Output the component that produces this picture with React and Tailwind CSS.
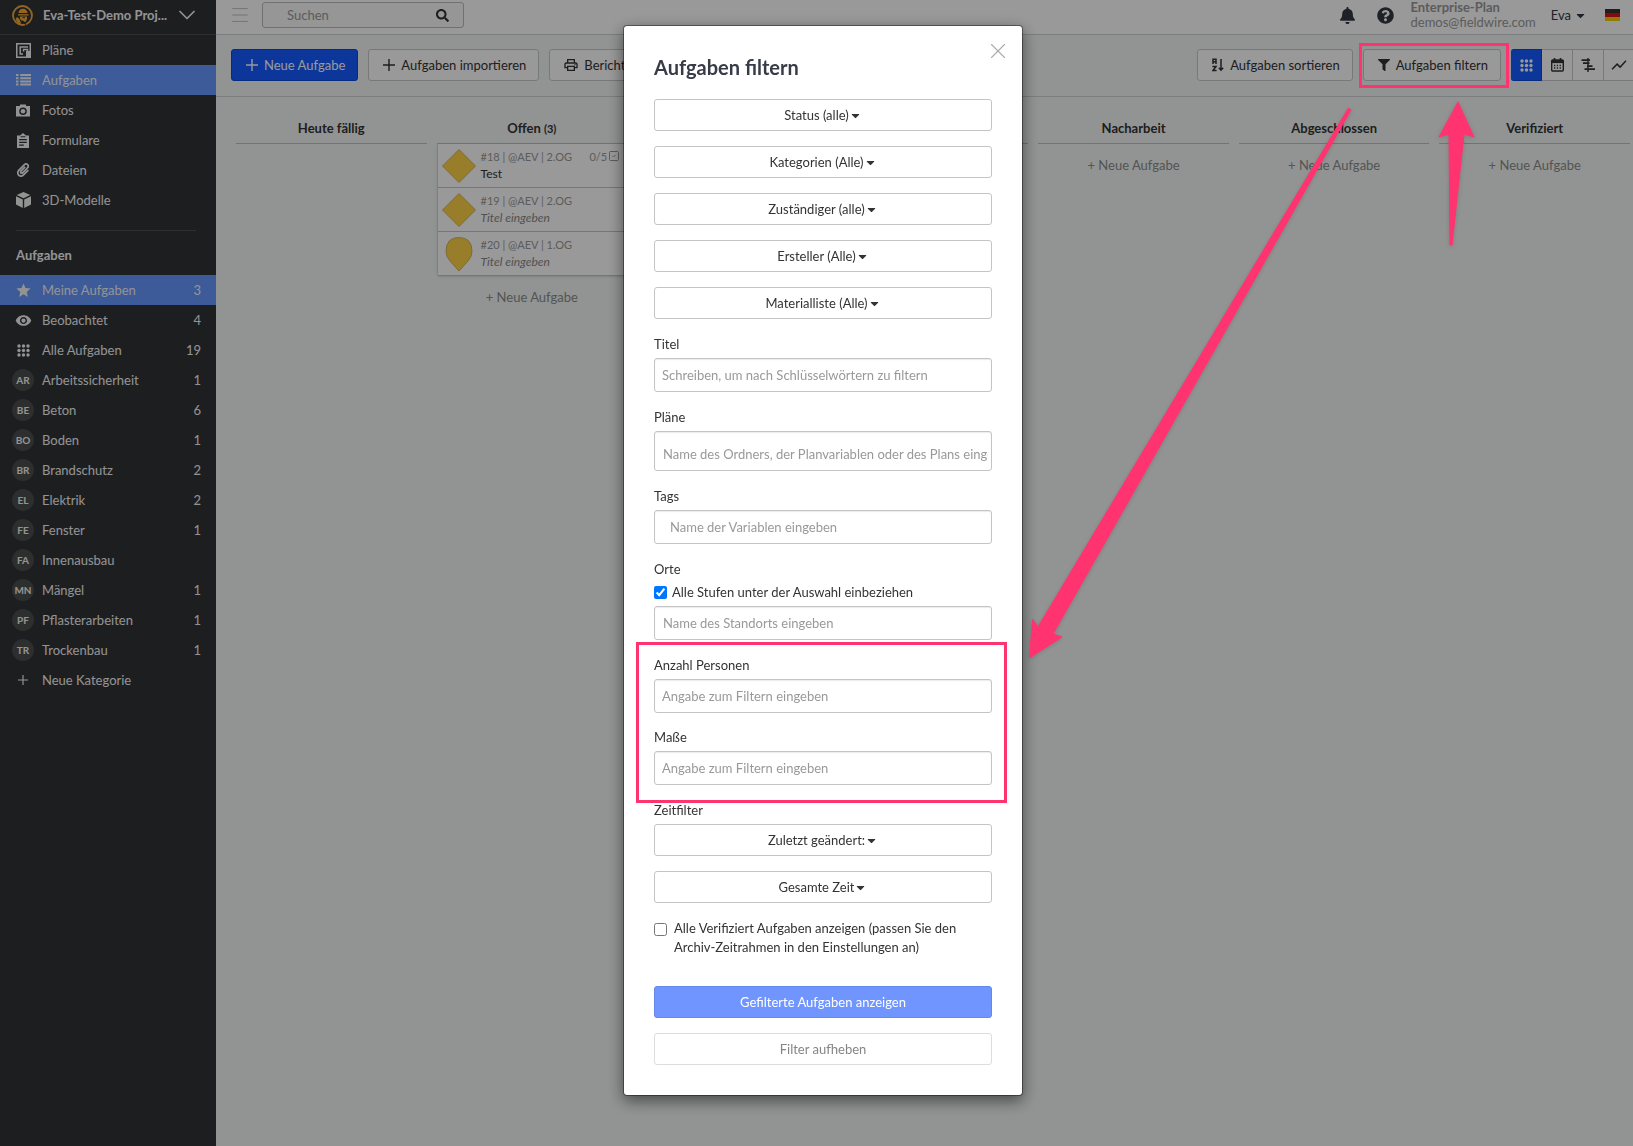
import { FaBell, FaCaretDown, FaFilter, FaPaperclip, FaQuestionCircle, FaSearch } from 'react-icons/fa';
import { MdOutlinePrint, MdShowChart, MdStar, MdVisibility } from 'react-icons/md';
import { ChevronDown, Menu, SquareCheck, X } from 'lucide-react';

const PlusIcon = ({ size = 12 }) => (
    <svg width={size} height={size} viewBox="0 0 12 12" fill="none" stroke="currentColor" strokeWidth="1.4">
        <path d="M6 0v12M0 6h12" />
    </svg>
);

const PlansIcon = () => (
    <svg width="15" height="15" viewBox="0 0 15 15" fill="none" stroke="currentColor">
        <rect x=".75" y=".75" width="13.5" height="13.5" strokeWidth="1.5" />
        <path d="M3.5 4H12M4.2 4v7.5M3.5 11H7M7.5 6.2v2.3M7 6.5h4.5v2" strokeWidth="1.5" />
        <path d="M10 8h4v6h-4z" fill="currentColor" stroke="none" />
    </svg>
);

const ListIcon = () => (
    <svg width="15" height="12" viewBox="0 0 15 12" fill="currentColor">
        <path d="M0 0h2.5v2H0zM0 3.2h2.5v2H0zM0 6.4h2.5v2H0zM0 9.6h2.5v2H0zM4.2 0H15v2H4.2zM4.2 3.2H15v2H4.2zM4.2 6.4H15v2H4.2zM4.2 9.6H15v2H4.2z" />
    </svg>
);

const CameraIcon = () => (
    <svg width="14" height="13" viewBox="0 0 14 13" fill="currentColor">
        <path fillRule="evenodd" d="M0 2h4V.5h6V2h4v10.5H0zM7 3.500a3.800 3.800 0 1 0 0 7.600a3.800 3.800 0 1 0 0-7.600z" />
        <circle cx="7" cy="7.300" r="2.300" />
    </svg>
);

const FormIcon = () => (
    <svg width="12" height="15" viewBox="0 0 12 15" fill="currentColor">
        <path fillRule="evenodd" d="M0 2.5h3L6 0l3 2.5h3V15H0zM2.2 6v1.3h7.6V6zM2.2 8.7V10h7.6V8.7zM2.2 11.4v1.3h4.6v-1.3zM3.6 3.3v1h4.8v-1z" />
    </svg>
);

const CubeIcon = () => (
    <svg width="15" height="16" viewBox="0 0 15 16" fill="currentColor">
        <path d="M7.5 0l6.8 2.9-6.8 3.3L.7 2.9zM0 4.2l6.8 3.4V16L0 12.4zM15 4.2L8.2 7.6V16l6.8-3.6z" />
    </svg>
);

const DotsIcon = () => (
    <svg width="13" height="13" viewBox="0 0 13 13" fill="currentColor">
        {[2, 6.5, 11].map((y) => [2, 6.5, 11].map((x) => <circle key={`${x}-${y}`} cx={x} cy={y} r="1.7" />))}
    </svg>
);

const SortIcon = () => (
    <svg width="12" height="14" viewBox="0 0 12 14" fill="none" stroke="currentColor" strokeWidth="1.5">
        <path d="M1 6V1.2h3V6M1 3.8h3M.4 8.5H4L1 12.5h3.6M9 1v11M6.8 9.8L9 12.2l2.2-2.4" />
    </svg>
);

const CalendarIcon = () => (
    <svg width="13" height="14" viewBox="0 0 13 14" fill="none" stroke="currentColor">
        <rect x=".7" y="2" width="11.6" height="11" rx="1" strokeWidth="1.4" />
        <path d="M.7 3.6h11.6" strokeWidth="3" />
        <path d="M3.5 0v3M9.5 0v3" strokeWidth="1.6" />
        <path d="M3 7.5h7M3 10h7" strokeWidth="1.3" strokeDasharray="1.3 1.5" />
    </svg>
);

const GanttIcon = () => (
    <svg width="14" height="14" viewBox="0 0 14 14" fill="none" stroke="currentColor" strokeWidth="1.8">
        <path d="M7 0v14" strokeWidth="1.4" />
        <path d="M.5 2.2H9M2 5.200h6.500M6 8.200h5.500M3.500 11.200H14" />
    </svg>
);

const HelmetLogo = () => (
    <svg width="21" height="21" viewBox="0 0 21 21" className="shrink-0">
        <circle cx="10.5" cy="10.5" r="9.5" fill="#303235" stroke="#f5a936" strokeWidth="1.8" />
        <path d="M6.500 8C6.800 5 8.500 3.800 11 3.800S15.300 5.400 15.600 8z" fill="#f5a936" />
        <path d="M6 9.200h10.600v1.300H6z" fill="#f5a936" />
        <path d="M3.500 14.500L5 12l2 1.500 1.500 3 .5 3.300-3-1.300z" fill="#f5a936" />
        <path d="M8 11.500h7v2.700L13.500 17l-1.700-.3-1-1.200-1 .2L8 14z" fill="#f5a936" />
        <path d="M10.500 12.800h2.500M11 16.500l3 3" stroke="#303235" strokeWidth="1.1" />
    </svg>
);

const GermanFlag = () => (
    <svg width="15" height="12" viewBox="0 0 15 12">
        <path fill="#333" d="M0 0h15v4H0z" />
        <path fill="#e0111a" d="M0 4h15v4H0z" />
        <path fill="#f5cf00" d="M0 8h15v4H0z" />
    </svg>
);

const NAV = [
    { label: 'Pläne', icon: <PlansIcon /> },
    { label: 'Aufgaben', icon: <ListIcon />, active: true },
    { label: 'Fotos', icon: <CameraIcon /> },
    { label: 'Formulare', icon: <FormIcon /> },
    { label: 'Dateien', icon: <FaPaperclip size={14} /> },
    { label: '3D-Modelle', icon: <CubeIcon /> },
];

const TASK_LISTS = [
    { label: 'Meine Aufgaben', icon: <MdStar size={17} />, count: 3, active: true },
    { label: 'Beobachtet', icon: <MdVisibility size={17} />, count: 4 },
    { label: 'Alle Aufgaben', icon: <DotsIcon />, count: 19 },
    { label: 'Arbeitssicherheit', code: 'AR', count: 1 },
    { label: 'Beton', code: 'BE', count: 6 },
    { label: 'Boden', code: 'BO', count: 1 },
    { label: 'Brandschutz', code: 'BR', count: 2 },
    { label: 'Elektrik', code: 'EL', count: 2 },
    { label: 'Fenster', code: 'FE', count: 1 },
    { label: 'Innenausbau', code: 'FA' },
    { label: 'Mängel', code: 'MN', count: 1 },
    { label: 'Pflasterarbeiten', code: 'PF', count: 1 },
    { label: 'Trockenbau', code: 'TR', count: 1 },
    { label: 'Neue Kategorie', icon: <PlusIcon size={10} /> },
];

const COLUMNS = [
    { id: 'today', title: 'Heute fällig' },
    {
        id: 'open',
        title: 'Offen',
        canAdd: true,
        tasks: [
            { id: 18, meta: '#18 | @AEV | 2.OG', title: 'Test', checks: '0/5' },
            { id: 19, meta: '#19 | @AEV | 2.OG' },
            { id: 20, meta: '#20 | @AEV | 1.OG', pin: true },
        ],
    },
    { id: 'col-3' },
    { id: 'col-4' },
    { id: 'rework', title: 'Nacharbeit', canAdd: true },
    { id: 'done', title: 'Abgeschlossen', canAdd: true },
    { id: 'verified', title: 'Verifiziert', canAdd: true },
];

const SidebarItem = ({ item }) => (
    <li>
        <a
            href="#"
            className={`flex h-[30px] items-center pl-3 pr-[15px] text-[#f5f5f5] ${item.active ? 'bg-[#6796ff]' : ''}`}
        >
            <span className="flex w-[22px] shrink-0 justify-center">
                {item.code ? (
                    <span className="flex size-[22px] items-center justify-center rounded-full bg-[#4b4d4d] text-[10px] font-bold">
                        {item.code}
                    </span>
                ) : (
                    item.icon
                )}
            </span>
            <span className="ml-2 flex-1">{item.label}</span>
            {item.count && <span>{item.count}</span>}
        </a>
    </li>
);

const Sidebar = () => (
    <aside className="w-[216px] shrink-0 bg-[#303235] text-[#f5f5f5]">
        <button type="button" className="flex h-[35px] w-full items-center border-b border-[#4d4f52] pl-3 pr-[15px] pb-1">
            <HelmetLogo />
            <span className="ml-2.5 whitespace-nowrap font-bold">Eva-Test-Demo Proj...</span>
            <ChevronDown size={28} strokeWidth={1.5} className="ml-auto shrink-0" />
        </button>
        <nav>
            <ul>
                {NAV.map((item) => <SidebarItem key={item.label} item={item} />)}
            </ul>
            <hr className="ml-4 mr-5 mt-[15px] border-[#4d4f52]" />
            <h2 className="flex h-11 items-center px-4 pt-1 font-bold">Aufgaben</h2>
            <ul>
                {TASK_LISTS.map((item) => <SidebarItem key={item.label} item={item} />)}
            </ul>
        </nav>
    </aside>
);

const Header = () => (
    <header className="flex h-[35px] items-center border-b border-[#cfd1d6] bg-white pl-[13px] pr-[13px] pb-1">
        <button type="button" aria-label="Menü" className="text-[#b9bbbd]">
            <Menu size={22} strokeWidth={1} />
        </button>
        <div className="ml-[11px] flex h-[26px] w-[202px] items-center rounded-[3px] border border-[#babdbf] bg-[#fafafa] pl-6 pr-3.5">
            <input type="search" aria-label="Suchen" placeholder="Suchen" className="w-full min-w-0 bg-transparent outline-none placeholder:text-[#999]" />
            <FaSearch size={13} className="shrink-0 text-[#333]" />
        </div>
        <div className="ml-auto flex items-center text-[#333844]">
            <button type="button" aria-label="Benachrichtigungen"><FaBell size={17} /></button>
            <button type="button" aria-label="Hilfe" className="ml-[21px]"><FaQuestionCircle size={17} /></button>
            <div className="ml-[17px] leading-[15px] text-[#999]">
                <div className="font-bold">Enterprise-Plan</div>
                <div>demos@fieldwire.com</div>
            </div>
            <button type="button" className="ml-[15px] flex items-center gap-[3px]">
                Eva <FaCaretDown size={13} />
            </button>
            <button type="button" aria-label="Sprache" className="ml-[18px]"><GermanFlag /></button>
        </div>
    </header>
);

const ToolbarButton = ({ icon, children, primary }) => (
    <button
        type="button"
        className={`flex h-8 items-center gap-1.5 whitespace-nowrap rounded-[3px] border pl-3.5 pr-3 ${
            primary ? 'border-[#0a48d6] bg-[#145aff] text-white' : 'border-[#c6c8cd] bg-white text-[#333]'
        }`}
    >
        {icon}
        {children}
    </button>
);

const VIEWS = [
    { label: 'Kanban', icon: <DotsIcon />, active: true },
    { label: 'Kalender', icon: <CalendarIcon /> },
    { label: 'Gantt', icon: <GanttIcon /> },
    { label: 'Bericht', icon: <MdShowChart size={18} /> },
];

const Toolbar = () => (
    <div className="flex h-[62px] items-center gap-2.5 border-b border-[#cfd1d6] pl-[15px] pb-px">
        <ToolbarButton primary icon={<PlusIcon />}>Neue Aufgabe</ToolbarButton>
        <ToolbarButton icon={<PlusIcon />}>Aufgaben importieren</ToolbarButton>
        <ToolbarButton icon={<MdOutlinePrint size={16} className="-mx-px" />}>Berichte</ToolbarButton>
        <div className="ml-auto flex items-center gap-2.5">
            <ToolbarButton icon={<SortIcon />}>Aufgaben sortieren</ToolbarButton>
            <div className="relative">
                <ToolbarButton icon={<FaFilter size={12} />}>Aufgaben filtern</ToolbarButton>
                <div className="pointer-events-none absolute -bottom-[7px] -left-1 -right-2 -top-1.5 z-50 border-3 border-[#ff3370]" />
                <svg width="120" height="200" viewBox="0 0 120 200" className="pointer-events-none absolute left-0 top-0 z-50 max-w-none drop-shadow-sm">
                    <path d="M95 53L111 88L101 85L89 196H87L86 85L76 88Z" fill="#ff3370" stroke="#ff3370" strokeLinejoin="round" />
                </svg>
            </div>
            <div className="-mr-0.5 flex">
                {VIEWS.map((view) => (
                    <button
                        key={view.label}
                        type="button"
                        aria-label={view.label}
                        className={`flex h-8 w-[31px] items-center justify-center border-y border-r first:rounded-l-[3px] ${
                            view.active ? 'border-[#0a48d6] bg-[#145aff] text-white' : 'border-[#c6c8cd] bg-white text-[#333]'
                        }`}
                    >
                        {view.icon}
                    </button>
                ))}
            </div>
        </div>
    </div>
);

const TaskCard = ({ task }) => (
    <li className="flex h-11 items-center border-b border-[#c4c5c8] bg-white pl-[3px] pr-[7px]">
        <svg width="36" height="36" viewBox="0 0 36 36" fill="#fdd347" stroke="#d0b458" className="shrink-0">
            {task.pin ? (
                <path d="M18 35L8.500 24.500Q5 20 5 15.500Q5 1.500 18 1.500Q31 1.500 31 15.500Q31 20 27.500 24.500Z" />
            ) : (
                <path d="M18 1.500L34.500 18L18 34.500L1.500 18Z" />
            )}
        </svg>
        <div className="ml-1 min-w-0 flex-1 pb-0.5 leading-[17px]">
            <div className="flex items-center justify-between text-[11px] text-[#999]">
                {task.meta}
                {task.checks && <span className="flex items-center gap-px">{task.checks}<SquareCheck size={12} /></span>}
            </div>
            {task.title ? (
                <div className="text-[12px] text-[#333]">{task.title}</div>
            ) : (
                <div className="text-[12px] italic text-[#888]">Titel eingeben</div>
            )}
        </div>
    </li>
);

const Board = () => (
    <div className="grid grid-cols-7 gap-2.5 pl-5 pr-[3px] pt-[17px]">
        {COLUMNS.map((column) => (
            <section key={column.id} className="min-w-0">
                <h3 className="h-[30px] border-b border-[#bfc1c2] pt-1 text-center font-bold leading-5 text-[#333]">
                    {column.title} {column.tasks && <span className="text-[11px]">({column.tasks.length})</span>}
                </h3>
                {column.tasks && (
                    <ul className="rounded-b-[3px] border-l border-[#d5d6d8] shadow-sm">
                        {column.tasks.map((task) => <TaskCard key={task.id} task={task} />)}
                    </ul>
                )}
                {column.canAdd && (
                    <button type="button" className="mt-[11px] h-5 w-full text-center text-[#8c8c8c]">+ Neue Aufgabe</button>
                )}
            </section>
        ))}
    </div>
);

const FilterSelect = ({ value }) => (
    <label className="flex h-8 items-center justify-center rounded-[3px] border border-[#c4c4c4] text-[#333]">
        <select aria-label={value} className="appearance-none bg-transparent outline-none field-sizing-content">
            <option>{value}</option>
        </select>
        <FaCaretDown size={13} className="pointer-events-none" />
    </label>
);

const TextField = ({ id, label, placeholder, className = 'h-[34px] px-[7px]', children }) => (
    <div>
        <label htmlFor={id} className="mb-1 block leading-5">{label}</label>
        {children}
        <input
            id={id}
            type="text"
            placeholder={placeholder}
            className={`block w-full rounded-[3px] border border-[#c4c4c4] shadow-[inset_0_1px_1px_rgba(0,0,0,0.08)] outline-none placeholder:text-[#999] ${className}`}
        />
    </div>
);

const FilterDialog = () => (
    <div className="fixed inset-0 z-40 flex items-start justify-center overflow-hidden bg-black/40 pl-[13px] pt-[25px]">
        <div role="dialog" aria-labelledby="filter-title" className="relative w-[400px] rounded-[4px] border border-black/40 bg-white bg-clip-padding px-[30px] pb-[30px] pt-[27px] text-[#333] shadow-[0_5px_15px_rgba(0,0,0,0.5)]">
            <button type="button" aria-label="Schließen" className="absolute right-[11px] top-3 text-[#aaa]">
                <X size={26} strokeWidth={1} />
            </button>
            <h2 id="filter-title" className="text-[20px] font-bold leading-7 text-[#373c47]">Aufgaben filtern</h2>

            <form className="mt-[18px] flex flex-col gap-[15px]">
                <div className="flex flex-col gap-[15px]">
                    <FilterSelect value="Status (alle)" />
                    <FilterSelect value="Kategorien (Alle)" />
                    <FilterSelect value="Zuständiger (alle)" />
                    <FilterSelect value="Ersteller (Alle)" />
                    <FilterSelect value="Materialliste (Alle)" />
                </div>

                <TextField id="title" label="Titel" placeholder="Schreiben, um nach Schlüsselwörtern zu filtern" />
                <TextField
                    id="plans"
                    label="Pläne"
                    placeholder="Name des Ordners, der Planvariablen oder des Plans eingeben"
                    className="h-10 pl-2 pr-[3px] pt-1.5"
                />
                <TextField id="tags" label="Tags" placeholder="Name der Variablen eingeben" className="h-[34px] px-[15px]" />
                <TextField id="places" label="Orte" placeholder="Name des Standorts eingeben" className="h-[34px] px-2">
                    <label className="mb-[5px] flex items-center gap-[5px] leading-[18px]">
                        <input type="checkbox" defaultChecked className="size-[13px]" />
                        Alle Stufen unter der Auswahl einbeziehen
                    </label>
                </TextField>

                <div className="relative flex flex-col gap-3.5">
                    <TextField id="people" label="Anzahl Personen" placeholder="Angabe zum Filtern eingeben" />
                    <TextField id="dimensions" label="Maße" placeholder="Angabe zum Filtern eingeben" />
                    <div className="pointer-events-none absolute -bottom-[18px] -left-[18px] -right-[15px] -top-[13px] border-3 border-[#ff3370]" />
                </div>

                <fieldset>
                    <legend className="mb-1 leading-5">Zeitfilter</legend>
                    <div className="flex flex-col gap-[15px]">
                        <FilterSelect value="Zuletzt geändert:" />
                        <FilterSelect value="Gesamte Zeit" />
                    </div>
                </fieldset>

                <label className="mt-px flex items-start gap-[7px] leading-[19px]">
                    <input type="checkbox" className="mt-1 size-[13px] shrink-0" />
                    Alle Verifiziert Aufgaben anzeigen (passen Sie den Archiv-Zeitrahmen in den Einstellungen an)
                </label>

                <button type="submit" className="mt-3.5 h-8 rounded-[3px] border border-[#6488ea] bg-[#7095ff] text-white">
                    Gefilterte Aufgaben anzeigen
                </button>
                <button type="reset" className="h-8 rounded-[3px] border border-[#ddd] text-[#858585]">Filter aufheben</button>
            </form>

            <svg width="340" height="640" viewBox="0 0 340 640" className="pointer-events-none absolute left-full top-0 max-w-none drop-shadow-sm">
                <path d="M7.500 632L10.500 593L16 601L326.500 82L329 84L31 608L40 611Z" fill="#ff3370" stroke="#ff3370" strokeLinejoin="round" />
            </svg>
        </div>
    </div>
);

const App = () => (
    <div className="flex min-h-screen bg-[#f3f7f5] font-['Lato',sans-serif] text-[13px] leading-5">
        <Sidebar />
        <main className="min-w-0 flex-1 overflow-hidden">
            <Header />
            <Toolbar />
            <Board />
        </main>
        <FilterDialog />
    </div>
);

export default App;
